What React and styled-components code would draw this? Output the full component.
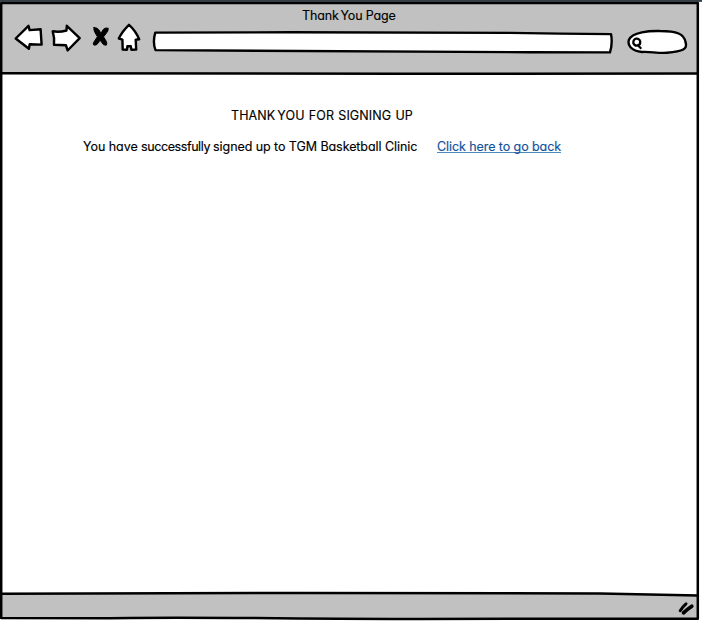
import React from "react";
import styled, { createGlobalStyle } from "styled-components";

const GlobalStyle = createGlobalStyle`
  * { box-sizing: border-box; }
  body { margin: 0; background: #fff; overflow: hidden; }
`;

const Screen = styled.div`
  width: 702px;
  height: 626px;
  display: flex;
  flex-direction: column;
  background: #fff;
  color: #000;
  font-family: Inter, "Open Sans", sans-serif;
  font-feature-settings: "cv11" 1;
  font-size: 12.5px;
  -webkit-text-stroke: 0.15px currentColor;
`;

const TopStrip = styled.div`
  height: 2px;
  flex: none;
  background: linear-gradient(#343e49 50%, #4b535c 50%);
`;

const Browser = styled.div`
  position: relative;
  width: 699px;
  height: 618px;
  display: flex;
  flex-direction: column;
`;

const Header = styled.header`
  height: 72px;
  margin-right: 1px;
  background: #c1c1c1;
`;

const Title = styled.div`
  height: 20px;
  padding: 5px 0 0 302px;
  line-height: 18px;
  white-space: nowrap;
`;

const Toolbar = styled.nav`
  display: flex;
  height: 34px;
  padding-left: 13px;
`;

const Sketch = styled.svg`
  display: block;
  flex: none;
  width: ${(p) => p.$w}px;
  height: 34px;
  margin-right: ${(p) => p.$gap || 0}px;
  fill: #fff;
  stroke: #000;
  stroke-width: 2.4;
  stroke-linecap: round;
  stroke-linejoin: round;
`;

const Ink = styled.path`
  fill: none;
  stroke-width: ${(p) => p.$width};
`;

const Blob = styled.path`
  fill: #000;
  stroke-width: 1;
`;

const Page = styled.main`
  height: 519px;
  padding: 33px 0 0 83px;
  background: #fff;
`;

const Heading = styled.h1`
  margin: 0 0 13px;
  padding-left: 148px;
  font: inherit;
  line-height: 18px;
`;

const Message = styled.div`
  display: flex;
  line-height: 18px;
  white-space: nowrap;
`;

const Sentence = styled.span`
  width: 354px;
`;

const Text = styled.span`
  letter-spacing: ${(p) => p.$track || 0}px;
  word-spacing: ${(p) => p.$word || 0}px;
  white-space: nowrap;
`;

const Link = styled.a`
  color: #10529c;
  text-decoration: underline;
  text-decoration-color: #4f88bf;
  text-decoration-thickness: 1px;
  text-underline-offset: 1px;
  text-decoration-skip-ink: none;
`;

const StatusBar = styled.footer`
  display: flex;
  justify-content: flex-end;
  height: 26px;
  margin-right: 1px;
  background: #c1c1c1;
`;

const Grip = styled.svg`
  width: 20px;
  height: 26px;
  margin-right: 2px;
  fill: none;
  stroke: #000;
  stroke-linecap: round;
`;

/* Hand-drawn ink lines lie over the edges of the window. */
const Outline = styled.svg`
  position: absolute;
  inset: 0;
  overflow: visible;
  pointer-events: none;
  fill: none;
  stroke: #000;
  stroke-width: 2.5;
  stroke-linejoin: round;
`;

export default function App() {
  return (
    <>
      <GlobalStyle />
      <Screen>
        <TopStrip />
        <Browser>
          <Header>
            <Title>
              <Text $track={-0.14} $word={-1.6}>Thank </Text>
              <Text $track={-0.14}>You Page</Text>
            </Title>
            <Toolbar>
              <Sketch $w={32} $gap={4} viewBox="13 22 32 34">
                <path d="M15.7 38.5L28.5 25.8L29.6 30.1L40.6 29.2L41.6 44.6L29.7 44.2L28.9 48.7Z" />
              </Sketch>
              <Sketch $w={34} $gap={7} viewBox="49 22 34 34">
                <path d="M52.7 31.3Q59 32.5 66.5 30.5L66.8 25.8L79.7 38.2L67.6 50.5L66 45.3L54 44.7Q54.8 38 52.7 31.3Z" />
              </Sketch>
              <Sketch $w={22} $gap={3} viewBox="90 22 22 34">
                <Blob d="M94 27.6Q97.3 27.4 99.3 30.3L100.8 33.4L103.5 29.2Q105.8 27.3 108.3 28.3Q108.4 31 106.3 33.3L103.5 36.8L106.4 41.5Q107.3 44.2 106.2 45.2Q103.4 45.6 101.8 42.6L100 39.9L98.3 43Q96.2 45.8 93.8 45Q92.4 43.8 94.6 40.9L97.4 36.7L95.2 33Q93.3 30 94 27.6Z" />
              </Sketch>
              <Sketch $w={28} $gap={8} viewBox="115 22 28 34">
                <path d="M129 24.8Q122 31.5 118.8 38.5L122.4 39.6L122.7 49.6L127 49.7L127.4 46.2L130.8 46.1L131.3 49.7L136.2 49.5L135.7 39.7L139.2 39.2Q135.5 30.5 129 24.8Z" />
              </Sketch>
              <Sketch $w={464} $gap={10} viewBox="151 22 464 34">
                <path d="M155.3 32.6C270 32.2 430 32 510 32.9Q560 34 611 34.1Q612.8 43 610 52.4C480 52.5 390 51.2 155.5 50.1Q152.4 42 155.3 32.6Z" />
              </Sketch>
              <Sketch $w={65} viewBox="625 22 65 34">
                <path d="M642 52C631 51 627.5 45 628.8 40C632 32 650 30.7 660 31C677 31 684 34 685.5 42C688 49 683 51.5 667 52.8C658 53.5 649 51.3 642 52Z" />
                <Ink $width={2.3} d="M640.2 41.4C640.8 46.4 635 47 633.4 43.3C632.4 37.8 639.4 37.2 640.2 41.4M638.3 44.8Q638.9 47 640.6 48" />
              </Sketch>
            </Toolbar>
          </Header>
          <Page>
            <Heading>
              <Text $track={0.1} $word={-1.6}>THANK </Text>
              <Text $track={0.1} $word={0.6}>YOU FOR SIGNING UP</Text>
            </Heading>
            <Message>
              <Sentence>
                <Text $track={-0.05}>You have </Text>
                <Text $track={-0.42}>successfully </Text>
                <Text $track={-0.07}>signed up to TGM Basketball Clinic</Text>
              </Sentence>
              <Link href="#"><Text $track={-0.08}>Click here to go back</Text></Link>
            </Message>
          </Page>
          <StatusBar>
            <Grip viewBox="676 593 20 26">
              <Ink $width={3} d="M680.2 610.8Q682.5 606.8 686 603.8" />
              <Ink $width={3.7} d="M683.5 612.8Q687 609.4 691.8 606.2" />
            </Grip>
          </StatusBar>
          <Outline width="699" height="618" viewBox="0 2 699 618">
            <path d="M560 592.5L697 592.5L697 596Z" fill="#fff" stroke="none" />
            <path d="M1.2 3.1L697.8 2.9L697.8 618.8C610 619.3 520 619.2 420 618.9C280 618.7 190 616.8 110 618.2L1.2 618.1Z" />
            <path d="M1 73.3C100 74 200 74.2 400 73.8L698 73.4M1 593.7Q180 593.8 300 593C440 592.8 530 592.8 600 593.5L698 595.6" />
          </Outline>
        </Browser>
      </Screen>
    </>
  );
}
